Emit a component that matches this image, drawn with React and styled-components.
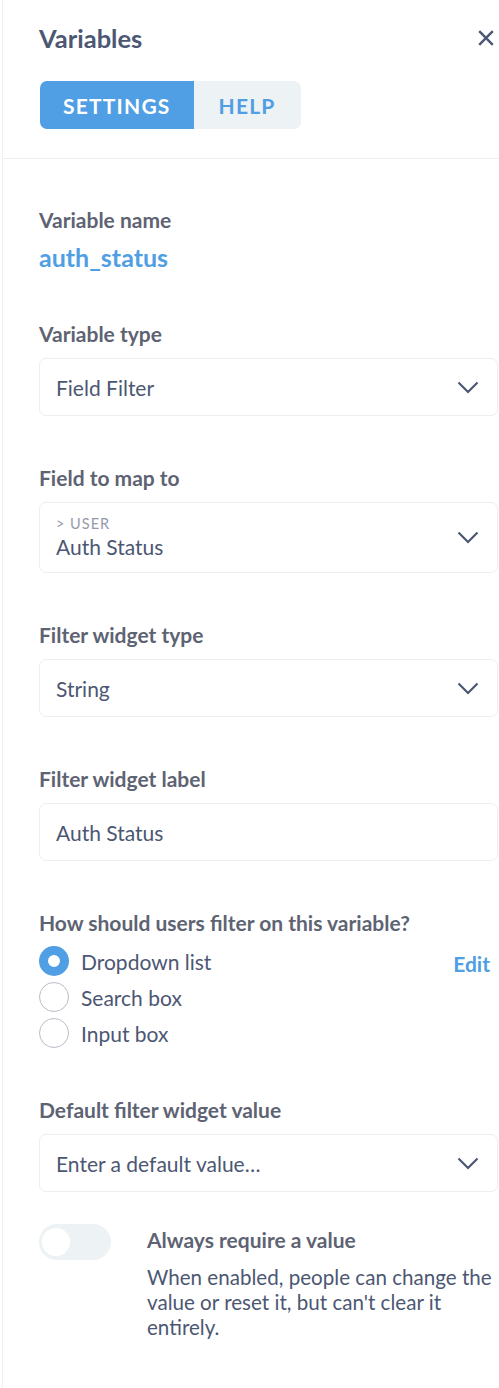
import React from "react";
import styled, { createGlobalStyle } from "styled-components";

const GlobalStyle = createGlobalStyle`
  html, body {
    margin: 0;
    padding: 0;
    background: #ffffff;
  }
  body {
    font-family: Lato, "Open Sans", "Liberation Sans", sans-serif;
    -webkit-font-smoothing: antialiased;
  }
`;

const Page = styled.div`
  padding-left: 2px;
  min-height: 1388px;
  box-sizing: border-box;
`;

const Panel = styled.div`
  border-left: 1px solid #f0f0f0;
  min-height: 1388px;
  box-sizing: border-box;
`;

const Header = styled.div`
  padding: 22px 1px 29px 36px;
  border-bottom: 1px solid #f0f0f0;
`;

const TitleRow = styled.div`
  display: flex;
  align-items: center;
  justify-content: space-between;
`;

const Title = styled.h2`
  margin: 0;
  font-size: 25.5px;
  line-height: 32px;
  font-weight: 700;
  color: #4c5773;
`;

const CloseButton = styled.button`
  border: 0;
  background: none;
  padding: 0;
  margin-right: 4px;
  width: 16px;
  height: 16px;
  display: flex;
  cursor: pointer;
`;

const Tabs = styled.div`
  display: inline-flex;
  margin-top: 27px;
  margin-left: 1px;
  border-radius: 7px;
  overflow: hidden;
`;

const Tab = styled.button`
  border: 0;
  height: 48px;
  padding: 0 ${(p) => p.$pad}px;
  font-family: inherit;
  font-size: 21px;
  font-weight: 700;
  letter-spacing: 1.2px;
  text-transform: uppercase;
  background: ${(p) => (p.$active ? "#509ee3" : "#edf2f5")};
  color: ${(p) => (p.$active ? "#ffffff" : "#509ee3")};
  cursor: pointer;
`;

const Body = styled.div`
  padding: 48px 1px 40px 36px;
  display: flex;
  flex-direction: column;
  gap: 49px;
`;

const Section = styled.div`
  display: flex;
  flex-direction: column;
`;

const Label = styled.div`
  font-size: 21px;
  line-height: 25px;
  font-weight: 700;
  color: #5e6373;
  margin-bottom: ${(p) => (p.$gap !== undefined ? p.$gap : 12)}px;
`;

const VarName = styled.div`
  font-size: 25px;
  line-height: 30px;
  font-weight: 700;
  color: #509ee3;
`;

const SelectBox = styled.div`
  display: flex;
  align-items: center;
  justify-content: space-between;
  border: 1px solid #eeeeee;
  border-radius: 7px;
  height: ${(p) => (p.$tall ? 71 : 58)}px;
  padding: 0 18px 0 16px;
  box-sizing: border-box;
  background: #ffffff;
`;

const SelectText = styled.div`
  display: flex;
  flex-direction: column;
`;

const Overline = styled.div`
  font-size: 14.5px;
  line-height: 16px;
  letter-spacing: 1px;
  text-transform: uppercase;
  color: #949aab;
  margin-bottom: 2px;
`;

const Value = styled.div`
  font-size: 21px;
  line-height: 25px;
  color: #4c5773;
`;

const Input = styled.input`
  border: 1px solid #eeeeee;
  border-radius: 7px;
  height: 58px;
  padding: 0 16px;
  box-sizing: border-box;
  font-family: inherit;
  font-size: 21px;
  color: #4c5773;
  outline: none;
`;

const RadioList = styled.div`
  display: flex;
  flex-direction: column;
  gap: 6px;
`;

const RadioRow = styled.label`
  display: flex;
  align-items: center;
  height: 30px;
  gap: 12px;
  font-size: 21px;
  line-height: 25px;
  color: #4c5773;
`;

const RadioDot = styled.span`
  width: 30px;
  height: 30px;
  border-radius: 50%;
  box-sizing: border-box;
  flex: none;
  border: ${(p) => (p.$checked ? "9px solid #509ee3" : "1px solid #b9bcc6")};
  background: #ffffff;
`;

const EditLink = styled.a`
  margin-left: auto;
  margin-right: 8px;
  font-size: 21px;
  font-weight: 700;
  color: #509ee3;
  text-decoration: none;
  position: relative;
  top: 2px;
`;

const ToggleRow = styled.div`
  display: flex;
  align-items: flex-start;
  gap: 36px;
  margin-top: -17px;
`;

const Toggle = styled.div`
  position: relative;
  width: 72px;
  height: 36px;
  border-radius: 18px;
  background: #edf2f5;
  flex: none;
`;

const Knob = styled.span`
  position: absolute;
  top: 4px;
  left: 3px;
  width: 28px;
  height: 28px;
  border-radius: 50%;
  background: #ffffff;
`;

const ToggleText = styled.div`
  padding-top: 3px;
`;

const ToggleTitle = styled.div`
  font-size: 21px;
  line-height: 25px;
  font-weight: 700;
  color: #5e6373;
  margin-bottom: 13px;
`;

const ToggleDesc = styled.div`
  font-size: 20.6px;
  line-height: 25px;
  color: #4c5773;
`;

const Chevron = () => (
  <svg width="22" height="13" viewBox="0 0 22 13" fill="none">
    <path d="M1.5 1.5L11 11L20.5 1.5" stroke="#4c5773" strokeWidth="2.2" />
  </svg>
);

const Select = ({ overline, value }) => (
  <SelectBox $tall={!!overline}>
    <SelectText>
      {overline && <Overline>{overline}</Overline>}
      <Value>{value}</Value>
    </SelectText>
    <Chevron />
  </SelectBox>
);

const radios = [
  { label: "Dropdown list", checked: true },
  { label: "Search box" },
  { label: "Input box" },
];

export default function App() {
  return (
    <Page>
      <GlobalStyle />
      <Panel>
        <Header>
          <TitleRow>
            <Title>Variables</Title>
            <CloseButton aria-label="Close">
              <svg width="16" height="16" viewBox="0 0 16 16" fill="none">
                <path d="M1.2 1.2L14.8 14.8M14.8 1.2L1.2 14.8" stroke="#4c5773" strokeWidth="2.4" />
              </svg>
            </CloseButton>
          </TitleRow>
          <Tabs>
            <Tab $active $pad={23}>Settings</Tab>
            <Tab $pad={25}>Help</Tab>
          </Tabs>
        </Header>

        <Body>
          <Section>
            <Label $gap={10}>Variable name</Label>
            <VarName>auth_status</VarName>
          </Section>

          <Section>
            <Label>Variable type</Label>
            <Select value="Field Filter" />
          </Section>

          <Section>
            <Label>Field to map to</Label>
            <Select overline="> User" value="Auth Status" />
          </Section>

          <Section>
            <Label>Filter widget type</Label>
            <Select value="String" />
          </Section>

          <Section>
            <Label>Filter widget label</Label>
            <Input defaultValue="Auth Status" />
          </Section>

          <Section>
            <Label $gap={11}>How should users filter on this variable?</Label>
            <RadioList>
              {radios.map((r) => (
                <RadioRow key={r.label}>
                  <RadioDot $checked={r.checked} />
                  {r.label}
                  {r.checked && <EditLink href="#">Edit</EditLink>}
                </RadioRow>
              ))}
            </RadioList>
          </Section>

          <Section>
            <Label>Default filter widget value</Label>
            <Select value="Enter a default value…" />
          </Section>

          <ToggleRow>
            <Toggle>
              <Knob />
            </Toggle>
            <ToggleText>
              <ToggleTitle>Always require a value</ToggleTitle>
              <ToggleDesc>
                When enabled, people can change the value or reset it, but can't clear it entirely.
              </ToggleDesc>
            </ToggleText>
          </ToggleRow>
        </Body>
      </Panel>
    </Page>
  );
}
